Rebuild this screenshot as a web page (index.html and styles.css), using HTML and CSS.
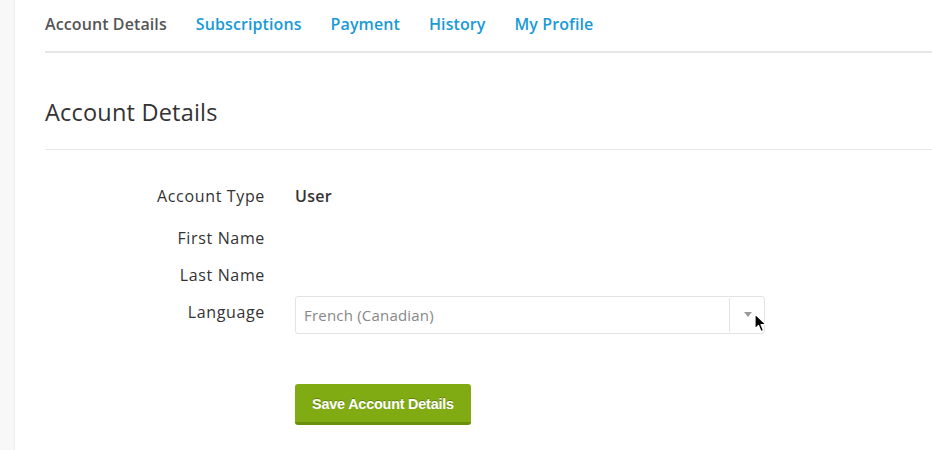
FILE: index.html
```html
<!DOCTYPE html>
<html>
<head>
<meta charset="utf-8">
<link rel="stylesheet" href="styles.css">
</head>
<body>
<div class="page">
  <aside class="rail"></aside>
  <main class="main">
    <nav class="tabs">
      <span class="tab active">Account Details</span>
      <a class="tab">Subscriptions</a>
      <a class="tab">Payment</a>
      <a class="tab">History</a>
      <a class="tab">My Profile</a>
    </nav>
    <h1 class="title">Account Details</h1>
    <form class="form">
      <div class="row">
        <div class="label">Account Type</div>
        <div class="value strong">User</div>
      </div>
      <div class="row">
        <div class="label">First Name</div>
        <div class="value"></div>
      </div>
      <div class="row">
        <div class="label">Last Name</div>
        <div class="value"></div>
      </div>
      <div class="row row-select">
        <div class="label">Language</div>
        <div class="value">
          <div class="select">
            <span class="select-text">French (Canadian)</span>
            <span class="select-arrow"><span class="tri"></span></span>
            <svg class="cursor" width="14" height="20" viewBox="0 0 14 20"><path d="M1 1 L1 16 L4.5 12.5 L7 18.5 L9.5 17.5 L7 11.5 L12 11.5 Z" fill="#000" stroke="#fff" stroke-width="1.2" stroke-linejoin="round"/></svg>
          </div>
        </div>
      </div>
      <div class="actions">
        <button type="button" class="btn">Save Account Details</button>
      </div>
    </form>
  </main>
</div>
</body>
</html>
```
FILE: styles.css
```css
* { box-sizing: border-box; }
html, body { margin: 0; padding: 0; background: #fff; }
body { font-family: "Open Sans", "Liberation Sans", sans-serif; color: #333; }
.page { display: flex; min-height: 450px; }
.rail { width: 15px; flex: none; background: #f8f8f8; border-right: 1px solid #ececec; }
.main { flex: 1; padding-left: 30px; }
.tabs {
  display: flex; gap: 29px; height: 53px; align-items: center;
  border-bottom: 2px solid #e6e6e6; padding-bottom: 4px;
}
.tab { font-size: 16px; font-weight: 600; color: #1a9ad6; letter-spacing: 0.1px; }
.tab.active { color: #555; }
.title {
  margin: 0; font-weight: 400; font-size: 23.5px; color: #333;
  height: 97px; line-height: 24px; padding-top: 47px;
  border-bottom: 1px solid #e8e8e8; letter-spacing: 0.2px;
}
.form { padding-top: 35px; }
.row { display: flex; align-items: baseline; height: 37px; }
.row:first-child { height: 42px; }
.label { width: 220px; text-align: right; font-size: 16px; color: #333; letter-spacing: 0.65px; }
.value { margin-left: 30px; font-size: 16px; }
.value.strong { font-weight: 600; color: #333; letter-spacing: 0.3px; }
.row-select { align-items: flex-start; height: auto; }
.select {
  position: relative; width: 470px; height: 38px; margin-top: -5px;
  border: 1px solid #e3e3e3; border-radius: 3px; display: flex; align-items: center;
}
.select-text { flex: 1; padding-left: 8px; font-size: 15px; color: #888; letter-spacing: 0.2px; }
.select-arrow {
  width: 35px; height: 34px; border-left: 1px solid #e3e3e3;
  display: flex; align-items: center; justify-content: center;
}
.tri { width: 0; height: 0; border-left: 4px solid transparent; border-right: 4px solid transparent; border-top: 5px solid #999; margin-left: 2px; margin-top: -2px; }
.cursor { position: absolute; left: 458px; top: 16px; }
.actions { padding-left: 250px; padding-top: 50px; }
.btn {
  width: 176px; height: 41px; border: 0; border-radius: 3px;
  background: #80ab13; border-bottom: 3px solid #6a8f0d;
  color: #fff; font-family: "Liberation Sans", Arial, sans-serif; font-weight: 700; font-size: 14.4px;
  text-shadow: 0 -1px 0 rgba(0,0,0,0.25); letter-spacing: -0.2px; padding: 0; padding-top: 2px;
}
```
